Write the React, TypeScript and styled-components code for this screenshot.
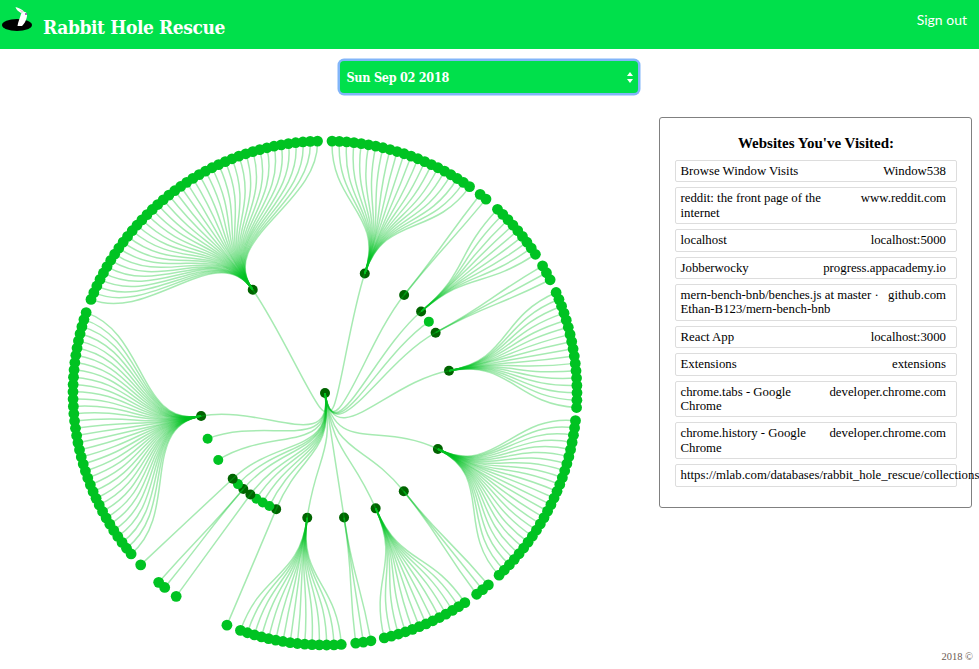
import styled, { createGlobalStyle } from 'styled-components';

const GlobalStyle = createGlobalStyle`
  html, body {
    margin: 0;
    overflow-x: hidden;
    background: #fff;
  }
`;

const CX = 325;
const CY = 393;
const R = 252;
const ROOT_ANGLE = 171.7;

type Branch = { angle: number; from?: number; to?: number; count?: number };

// one entry per child of the root, clockwise from the top, angles in degrees
const branches: Branch[] = [
  { angle: 18.4, from: 1.6, to: 35, count: 21 },
  { angle: 38.9, from: 38, to: 39.7, count: 2 },
  { angle: 49.7, from: 43.2, to: 56.6, count: 9 },
  { angle: 55.5 },
  { angle: 61.4, from: 59.7, to: 63.3, count: 3 },
  { angle: 79.8, from: 66.5, to: 93.3, count: 17 },
  { angle: 116.4, from: 96.3, to: 136.3, count: 25 },
  { angle: 141.3, from: 139.6, to: 143, count: 3 },
  { angle: 156.3, from: 146.3, to: 166.4, count: 13 },
  { angle: 171.3, from: 169.5, to: 173, count: 3 },
  { angle: 188.1, from: 176.3, to: 199.6, count: 15 },
  { angle: 202.8, from: 202.9, to: 202.9, count: 1 },
  { angle: 206.2 },
  { angle: 209.6 },
  { angle: 213 },
  { angle: 216.3, from: 216.2, to: 216.2, count: 1 },
  { angle: 220.4, from: 219.5, to: 221.3, count: 2 },
  { angle: 223.7 },
  { angle: 227.1, from: 227, to: 227, count: 1 },
  { angle: 237.9 },
  { angle: 248.7 },
  { angle: 259.5, from: 230.3, to: 288.6, count: 36 },
  { angle: 325, from: 291.8, to: 358.3, count: 41 },
];

const point = (angle: number, r: number) => {
  const a = (angle * Math.PI) / 180;
  return `${(CX + r * Math.sin(a)).toFixed(2)},${(CY - r * Math.cos(a)).toFixed(2)}`;
};

const coords = (angle: number, r: number) => {
  const [x, y] = point(angle, r).split(',');
  return { cx: x, cy: y };
};

const radialLink = (a0: number, r0: number, a1: number, r1: number) => {
  const mid = (r0 + r1) / 2;
  return `M${point(a0, r0)}C${point(a0, mid)} ${point(a1, mid)} ${point(a1, r1)}`;
};

const leavesOf = (b: Branch) => {
  if (!b.count) return [];
  return Array.from({ length: b.count }, (_, i) =>
    b.count === 1 ? b.from! : b.from! + ((b.to! - b.from!) * i) / (b.count! - 1)
  );
};

const visits = [
  { title: 'Browse Window Visits', host: 'Window538' },
  { title: 'reddit: the front page of the internet', host: 'www.reddit.com' },
  { title: 'localhost', host: 'localhost:5000' },
  { title: 'Jobberwocky', host: 'progress.appacademy.io' },
  { title: 'mern-bench-bnb/benches.js at master · Ethan-B123/mern-bench-bnb', host: 'github.com' },
  { title: 'React App', host: 'localhost:3000' },
  { title: 'Extensions', host: 'extensions' },
  { title: 'chrome.tabs - Google Chrome', host: 'developer.chrome.com' },
  { title: 'chrome.history - Google Chrome', host: 'developer.chrome.com' },
  { title: 'https://mlab.com/databases/rabbit_hole_rescue/collections', host: '' },
];

const Page = styled.div`
  display: flex;
  flex-direction: column;
  min-height: 669px;
  font-family: 'Liberation Serif', 'Times New Roman', serif;
`;

const Header = styled.header`
  display: flex;
  justify-content: space-between;
  height: 49px;
  background: #00e04b;
  color: #fff;
`;

const Brand = styled.div`
  display: flex;
  align-items: flex-start;
`;

const Logo = styled.svg`
  width: 43px;
  height: 40px;
  flex: none;
`;

const Title = styled.h1`
  margin: 0;
  padding-top: 14px;
  font-family: 'DejaVu Serif Condensed', 'DejaVu Serif', serif;
  font-stretch: condensed;
  font-size: 19px;
  line-height: 26px;
  font-weight: 700;
  letter-spacing: -0.4px;
`;

const SignOut = styled.a`
  padding: 11px 12px 0 0;
  font-family: Lato, sans-serif;
  font-size: 14px;
  line-height: 17px;
`;

const DateRow = styled.div`
  display: flex;
  justify-content: center;
  height: 56px;
  padding: 12px 2px 0 0;
`;

const DateSelect = styled.div`
  display: flex;
  align-items: center;
  justify-content: space-between;
  box-sizing: border-box;
  width: 298px;
  height: 32px;
  padding: 0 5px 0 7px;
  border-radius: 4px;
  background: #00e04b;
  box-shadow: 0 0 0 2.5px #82b5f9;
  color: #fff;
  font-family: 'DejaVu Serif Condensed', 'DejaVu Serif', serif;
  font-stretch: condensed;
  font-size: 12.5px;
  font-weight: 700;
  letter-spacing: -0.25px;
`;

const Main = styled.main`
  display: flex;
  align-items: flex-start;
  flex: 1;
`;

const Chart = styled.svg`
  display: block;
  width: 659px;
  height: 534px;
  flex: none;
`;

const Link = styled.path`
  fill: none;
  stroke: #00c322;
  stroke-opacity: 0.35;
  stroke-width: 1.5;
`;

const Node = styled.circle<{ $parent?: boolean }>`
  fill: ${p => (p.$parent ? '#006400' : '#00c322')};
`;

const Panel = styled.aside`
  box-sizing: border-box;
  width: 313px;
  height: 391px;
  padding: 16px 14px 0 15px;
  border: 1px solid #808080;
  border-radius: 3px;
`;

const PanelTitle = styled.h2`
  margin: 0 0 8px;
  font-size: 15px;
  line-height: 18px;
  font-weight: 700;
  text-align: center;
`;

const VisitList = styled.ul`
  display: flex;
  flex-direction: column;
  gap: 5px;
  margin: 0;
  padding: 0;
  list-style: none;
`;

const VisitRow = styled.li`
  display: flex;
  justify-content: space-between;
  gap: 4px;
  padding: 3px 10px 3px 4.5px;
  border: 1px solid #ddd;
  border-radius: 2px;
  font-size: 12.8px;
  line-height: 14.4px;
  color: #000;
`;

const VisitHost = styled.span`
  flex: none;
  white-space: nowrap;
`;

const Footer = styled.footer`
  padding: 0 6px 6px;
  font-size: 10.5px;
  line-height: 12px;
  color: #6b5b52;
  text-align: right;
`;

const App = () => (
  <Page>
    <GlobalStyle />
    <Header>
      <Brand>
        <Logo viewBox="0 0 43 40">
          <ellipse cx="17" cy="25" rx="15" ry="6" fill="#000" />
          <path d="M17.5 26 C18 22 20 18 21 14 C22 11 26 11 27 14 C27.5 18 24.5 24 22 26 Z" fill="#fff" />
          <path d="M21 13 C18.5 11.5 16 9.5 15.5 7 C18.5 7.5 22 9.5 24 11.5 Z" fill="#fff" />
          <path d="M21.5 12 C20.5 11 20 10.5 19.5 9.8 C21 10.2 22.5 11 23.5 12 Z" fill="#f5b8d8" />
          <circle cx="26" cy="14" r="1" fill="#8a3fa8" />
        </Logo>
        <Title>Rabbit Hole Rescue</Title>
      </Brand>
      <SignOut>Sign out</SignOut>
    </Header>
    <DateRow>
      <DateSelect>
        Sun Sep 02 2018
        <svg width="6" height="11" viewBox="0 0 6 11">
          <path d="M3 0 L6 4 H0 Z M3 11 L0 7 H6 Z" fill="#fff" />
        </svg>
      </DateSelect>
    </DateRow>
    <Main>
      <Chart viewBox="0 117 659 534">
        {branches.flatMap((b, i) =>
          leavesOf(b).map((a, j) => <Node key={`leaf-${i}-${j}`} r="5.4" {...coords(a, R)} />)
        )}
        {branches.map((b, i) => (
          <Node key={`branch-${i}`} r="5" $parent={!!b.count} {...coords(b.angle, 126)} />
        ))}
        <Node r="5" $parent cx={CX} cy={CY} />
        {branches.map((b, i) => (
          <Link key={`root-${i}`} d={radialLink(ROOT_ANGLE, 0, b.angle, 126)} />
        ))}
        {branches.flatMap((b, i) =>
          leavesOf(b).map((a, j) => (
            <Link key={`link-${i}-${j}`} d={radialLink(b.angle, 126, a, R)} />
          ))
        )}
      </Chart>
      <Panel>
        <PanelTitle>Websites You've Visited:</PanelTitle>
        <VisitList>
          {visits.map(v => (
            <VisitRow key={v.title}>
              <span>{v.title}</span>
              {v.host && <VisitHost>{v.host}</VisitHost>}
            </VisitRow>
          ))}
        </VisitList>
      </Panel>
    </Main>
    <Footer>2018 ©</Footer>
  </Page>
);

export default App;
